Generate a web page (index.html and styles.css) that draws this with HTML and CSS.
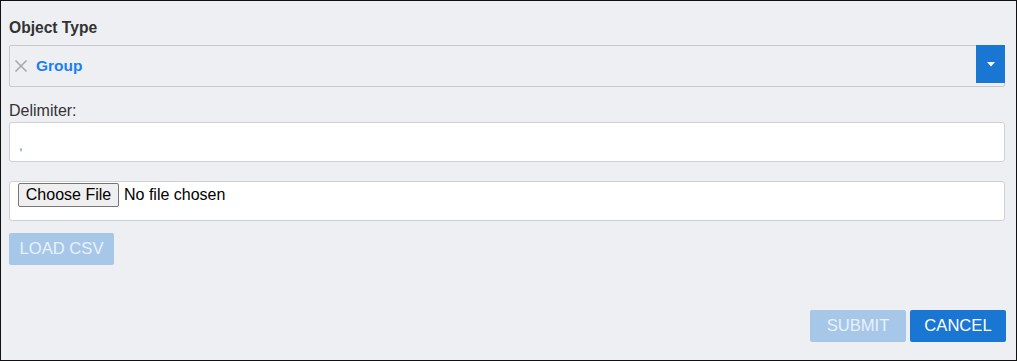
FILE: index.html
```html
<!DOCTYPE html>
<html>
<head>
<meta charset="utf-8">
<link rel="stylesheet" href="styles.css">
</head>
<body>
<div class="frame">
  <div class="field-label">Object Type</div>
  <div class="select">
    <svg class="clear" width="14" height="14" viewBox="0 0 14 14"><path d="M1.5 1.5 L12.5 12.5 M12.5 1.5 L1.5 12.5" stroke="#a8a8a8" stroke-width="1.6" fill="none"/></svg>
    <span class="select-value">Group</span>
    <span class="select-arrow"><svg width="8" height="5" viewBox="0 0 8 5"><path d="M0 0 H8 L4 4.5 Z" fill="#fff"/></svg></span>
  </div>
  <div class="plain-label">Delimiter:</div>
  <div class="text-input"><span class="delim">,</span></div>
  <div class="file-box">
    <span class="file-btn">Choose File</span>
    <span class="file-name">No file chosen</span>
  </div>
  <div class="load-row"><span class="btn btn-disabled load">LOAD CSV</span></div>
  <div class="actions">
    <span class="btn btn-disabled">SUBMIT</span>
    <span class="btn btn-primary">CANCEL</span>
  </div>
</div>
</body>
</html>
```
FILE: styles.css
```css
html, body {
  margin: 0;
  padding: 0;
  background: #fff;
}
.frame {
  box-sizing: border-box;
  width: 1017px;
  height: 361px;
  border: 1px solid #111;
  background: #eeeff3;
  padding: 18px 11px 0 8px;
  font-family: "Liberation Sans", Arial, sans-serif;
  color: #333;
  display: flex;
  flex-direction: column;
}
.field-label {
  font-size: 15.6px;
  font-weight: bold;
  line-height: 18px;
  height: 26px;
  color: #333;
}
.select {
  position: relative;
  box-sizing: border-box;
  height: 42px;
  border: 1px solid #c8c9cc;
  border-radius: 2px;
  display: flex;
  align-items: center;
  padding-left: 4px;
}
.clear {
  display: block;
}
.select-value {
  margin-left: 8px;
  font-size: 15.5px;
  font-weight: bold;
  color: #1a7ff2;
}
.select-arrow {
  position: absolute;
  top: -1px;
  right: -1px;
  width: 29px;
  height: 38px;
  background: #1976d2;
  display: flex;
  align-items: center;
  justify-content: center;
}
.select-arrow svg { display: block; margin-top: 1px; }
.plain-label {
  margin-top: 15px;
  font-size: 16px;
  line-height: 18px;
  height: 20px;
  color: #333;
}
.text-input {
  box-sizing: border-box;
  height: 40px;
  background: #fff;
  border: 1px solid #cfd0d3;
  border-radius: 3px;
  padding-left: 9px;
  padding-top: 13px;
}
.delim {
  color: #1a7ff2;
  font-size: 13px;
}
.file-box {
  margin-top: 19px;
  box-sizing: border-box;
  height: 40px;
  background: #fff;
  border: 1px solid #cfd0d3;
  border-radius: 3px;
  padding: 1px 0 0 8px;
  display: flex;
  align-items: flex-start;
  font-size: 16px;
  color: #000;
}
.file-btn {
  box-sizing: border-box;
  height: 24px;
  width: 101px;
  border: 1px solid #767676;
  border-radius: 2px;
  background: #efefef;
  line-height: 22px;
  text-align: center;
  color: #000;
}
.file-name {
  margin-left: 5px;
  line-height: 24px;
}
.load-row {
  margin-top: 12px;
  display: flex;
}
.btn {
  box-sizing: border-box;
  height: 32px;
  width: 96px;
  display: flex;
  align-items: center;
  justify-content: center;
  font-size: 16.6px;
  color: #fff;
  border-radius: 2px;
}
.load { width: 105px; }
.btn-disabled { background: #a7c7e9; color: #e9f1fb; }
.btn-primary { background: #1976d2; color: #fff; }
.actions {
  margin-top: auto;
  margin-bottom: 18px;
  display: flex;
  justify-content: flex-end;
  gap: 4px;
  margin-right: -1px;
}
```
